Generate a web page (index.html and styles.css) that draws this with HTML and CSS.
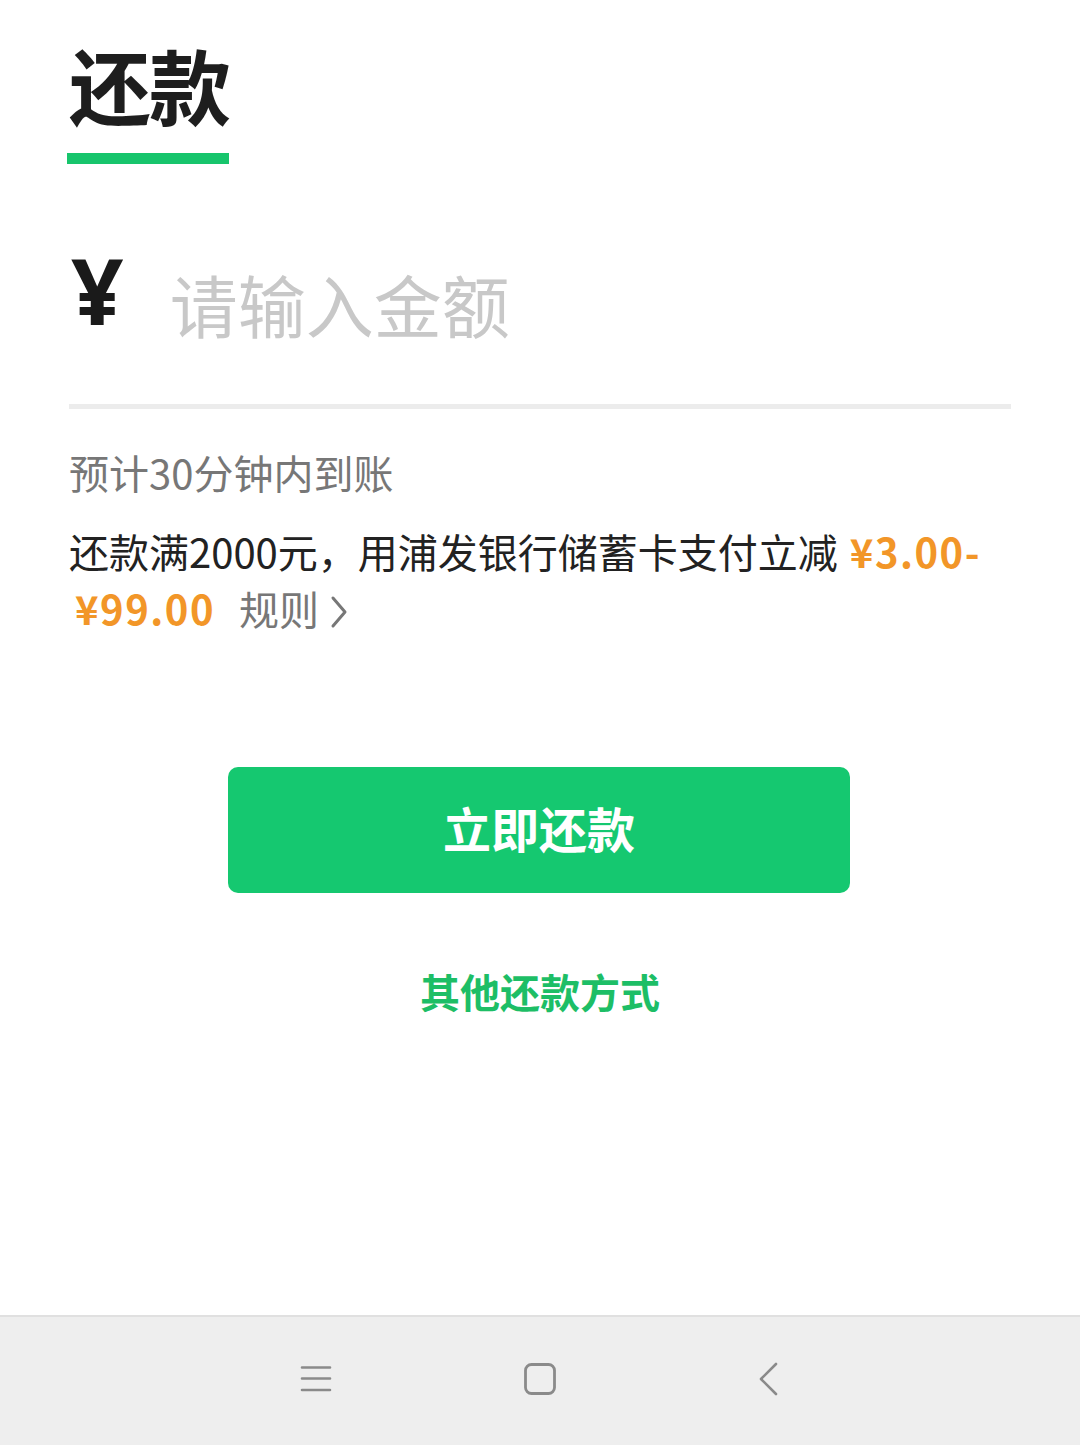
FILE: index.html
```html
<!DOCTYPE html>
<html lang="zh-CN">
<head>
<meta charset="utf-8">
<title>还款</title>
<link rel="stylesheet" href="styles.css">
</head>
<body>
<div class="page">
  <main class="main">
    <header class="header">
      <h1 class="title">还款</h1>
      <div class="title-bar"></div>
    </header>
    <div class="amount-row">
      <span class="yen">¥</span>
      <span class="placeholder">请输入金额</span>
    </div>
    <div class="divider"></div>
    <p class="eta">预计30分钟内到账</p>
    <p class="promo">还款满2000元，用浦发银行储蓄卡支付立减<span class="money">¥3.00-</span><br><span class="money money-start">¥99.00</span><span class="rule">规则<svg class="rule-arrow" viewBox="0 0 20 34" width="20" height="34"><path d="M4 3 L16 17 L4 31" fill="none" stroke="#777" stroke-width="3" stroke-linecap="round" stroke-linejoin="round"/></svg></span></p>
    <div class="actions">
      <button class="pay-btn">立即还款</button>
      <a class="other-link">其他还款方式</a>
    </div>
  </main>
  <nav class="navbar">
    <svg class="nav-icon" viewBox="0 0 32 32" width="32" height="32"><path d="M2 4.5 H30 M2 15.5 H30 M2 27 H30" stroke="#8a8a8a" stroke-width="2.6" stroke-linecap="round"/></svg>
    <svg class="nav-icon" viewBox="0 0 34 34" width="34" height="34"><rect x="2.5" y="2.5" width="29" height="29" rx="6" fill="none" stroke="#8a8a8a" stroke-width="2.8"/></svg>
    <svg class="nav-icon" viewBox="0 0 22 34" width="22" height="34"><path d="M19 2 L4 17 L19 32" fill="none" stroke="#8a8a8a" stroke-width="2.6" stroke-linecap="round" stroke-linejoin="round"/></svg>
  </nav>
</div>
</body>
</html>
```
FILE: styles.css
```css
* { box-sizing: border-box; }
html, body {
  margin: 0;
  padding: 0;
  background: #ffffff;
}
body {
  font-family: "Noto Sans CJK SC", "Noto Sans", sans-serif;
  color: #222222;
}
.page {
  width: 1080px;
  height: 1445px;
  display: flex;
  flex-direction: column;
}
.main {
  flex: 1;
  padding: 0 69px 0 69px;
  display: flex;
  flex-direction: column;
}
.header {
  padding-top: 42px;
}
.title {
  margin: 0;
  font-size: 82px;
  line-height: 84px;
  font-weight: 700;
  color: #1e1e1e;
  letter-spacing: -2px;
}
.title-bar {
  margin-top: 27px;
  margin-left: -2px;
  width: 162px;
  height: 11px;
  background: #17c56c;
}
.amount-row {
  display: flex;
  align-items: flex-start;
  margin-top: 80px;
  height: 160px;
}
.yen {
  font-family: "Noto Sans", "Noto Sans CJK SC", sans-serif;
  font-size: 92px;
  line-height: 92px;
  font-weight: 700;
  color: #1a1a1a;
  margin-left: 2px;
}
.placeholder {
  font-size: 68px;
  line-height: 68px;
  color: #c8c8c8;
  margin-left: 46px;
  margin-top: 26px;
}
.divider {
  height: 5px;
  background: #ececec;
}
.eta {
  margin: 35px 0 0 0;
  font-size: 40px;
  line-height: 57px;
  color: #777777;
}
.promo {
  margin: 22px 0 0 0;
  font-size: 40px;
  line-height: 57px;
  color: #222222;
  white-space: nowrap;
}
.money {
  color: #f29628;
  font-weight: 700;
  margin-left: 12px;
  letter-spacing: 1.5px;
}
.money-start {
  margin-left: 6px;
}
.rule {
  color: #777777;
  margin-left: 24px;
}
.rule-arrow {
  margin-left: 10px;
  vertical-align: -4px;
}
.actions {
  display: flex;
  flex-direction: column;
  align-items: center;
  margin-top: 130px;
}
.pay-btn {
  width: 622px;
  height: 126px;
  border: none;
  border-radius: 10px;
  background: #15c870;
  color: #ffffff;
  font-family: "Noto Sans CJK SC", "Noto Sans", sans-serif;
  font-size: 48px;
  font-weight: 700;
  padding: 0 0 6px 0;
  margin-left: -2px;
}
.other-link {
  margin-top: 72px;
  font-size: 40px;
  line-height: 52px;
  font-weight: 700;
  color: #1dbe66;
}
.navbar {
  height: 130px;
  flex: none;
  background: #eeeeee;
  border-top: 2px solid #e0e0e0;
  display: flex;
  align-items: center;
  gap: 191px;
  padding: 0 0 4px 300px;
}
.navbar .nav-icon:last-child {
  margin-left: 9px;
}
.nav-icon {
  display: block;
}
```
